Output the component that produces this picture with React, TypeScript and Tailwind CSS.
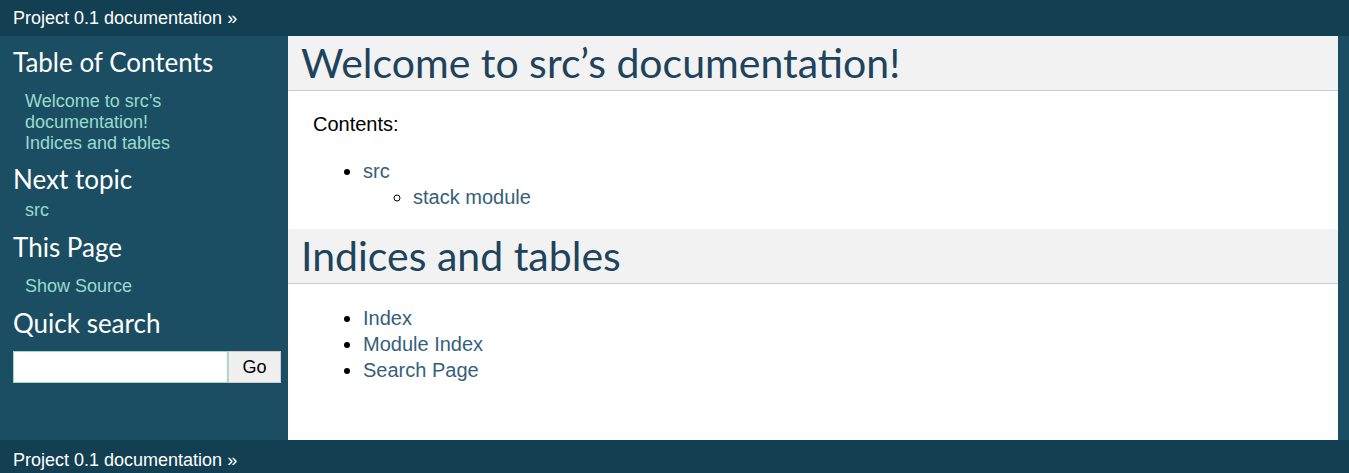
import React from 'react';

const heading = "font-['Lato','Trebuchet_MS',sans-serif]";

const SideHeading = ({ children, className = '' }: { children: React.ReactNode; className?: string }) => (
  <h3 className={`${heading} text-[26px] leading-[31px] text-white ${className}`}>{children}</h3>
);

const SideLink = ({ children }: { children: React.ReactNode }) => (
  <a href="#" className="text-[#98dbcc] no-underline">{children}</a>
);

const RelatedBar = ({ className = '' }: { className?: string }) => (
  <div className={`h-[36px] shrink-0 bg-[#133f52] px-[13px] flex items-center text-white text-[18px] ${className}`}>
    <a href="#" className="text-white">Project 0.1 documentation</a>
    <span className="ml-[5px]">»</span>
  </div>
);

const BodyHeading = ({ children, className = '' }: { children: React.ReactNode; className?: string }) => (
  <h1
    className={`${heading} -mx-[25px] bg-[#f2f2f2] border-b border-[#cccccc] pl-[13px] py-[4px] text-[41px] leading-[46px] text-[#20435c] font-normal ${className}`}
  >
    {children}
  </h1>
);

export default function App() {
  return (
    <div className="w-[1349px] h-[473px] bg-[#11303d] font-['Liberation_Sans',Arial,sans-serif] overflow-hidden">
      <RelatedBar />

      <div className="flex h-[404px] bg-[#1c4e63]">
        {/* sidebar */}
        <aside className="w-[288px] shrink-0 pl-[13px] pr-[7px] pt-[11px]">
          <SideHeading>Table of Contents</SideHeading>
          <ul className="ml-[12px] mt-[13px] text-[18px] leading-[21px]">
            <li>
              <SideLink>Welcome to src’s documentation!</SideLink>
              <ul>
                <li>
                  <SideLink>Indices and tables</SideLink>
                </li>
              </ul>
            </li>
          </ul>

          <SideHeading className="mt-[10px]">Next topic</SideHeading>
          <p className="ml-[12px] mt-[5px] text-[18px] leading-[21px]">
            <SideLink>src</SideLink>
          </p>

          <SideHeading className="mt-[11px]">This Page</SideHeading>
          <ul className="ml-[12px] mt-[13px] text-[18px] leading-[21px]">
            <li>
              <SideLink>Show Source</SideLink>
            </li>
          </ul>

          <SideHeading className="mt-[11px]">Quick search</SideHeading>
          <form className="flex mt-[12px]" onSubmit={e => e.preventDefault()}>
            <input
              type="text"
              className="w-[215px] h-[32px] bg-white border border-[#98dbcc] outline-none px-1 text-[16px]"
            />
            <button
              type="submit"
              className="w-[53px] h-[32px] bg-[#f0f0f0] border border-[#cccccc] text-[18px] text-black"
            >
              Go
            </button>
          </form>
        </aside>

        {/* body */}
        <main className="flex-1 mr-[11px] bg-white px-[25px] text-black text-[20px]">
          <BodyHeading>Welcome to src’s documentation!</BodyHeading>

          <p className="mt-[20px] leading-[26px]">Contents:</p>

          <ul className="mt-[21px] ml-[50px] list-disc leading-[26px]">
            <li>
              <a href="#" className="text-[#355f7c]">src</a>
              <ul className="ml-[50px] list-[circle]">
                <li>
                  <a href="#" className="text-[#355f7c]">stack module</a>
                </li>
              </ul>
            </li>
          </ul>

          <BodyHeading className="mt-[19px]">Indices and tables</BodyHeading>

          <ul className="mt-[21px] ml-[50px] list-disc leading-[26px]">
            <li>
              <a href="#" className="text-[#355f7c]">Index</a>
            </li>
            <li>
              <a href="#" className="text-[#355f7c]">Module Index</a>
            </li>
            <li>
              <a href="#" className="text-[#355f7c]">Search Page</a>
            </li>
          </ul>
        </main>
      </div>

      <RelatedBar className="pt-[4px]" />
    </div>
  );
}
